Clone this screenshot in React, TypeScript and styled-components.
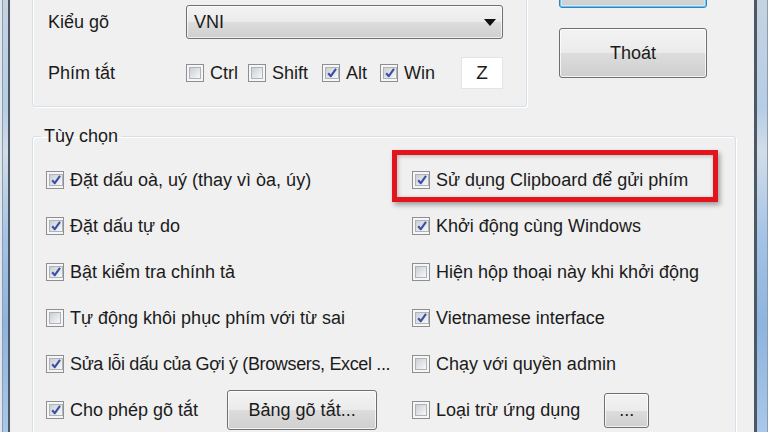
import React from 'react';
import styled, { createGlobalStyle } from 'styled-components';

const GlobalStyle = createGlobalStyle`
  html, body { margin: 0; padding: 0; background: #f0f0f0; }
  body { font-family: "Liberation Sans", Arial, sans-serif; }
  * { box-sizing: border-box; }
`;

const Window = styled.div`
  width: 768px;
  height: 432px;
  overflow: hidden;
  display: flex;
  font-family: "Liberation Sans", Arial, sans-serif;
  font-size: 18px;
  color: #1b1b1b;
`;

const FrameEdge = styled.div<{ $side: 'left' | 'right' }>`
  flex: none;
  width: ${(p) => (p.$side === 'left' ? 11 : 15)}px;
  background: ${(p) =>
      p.$side === 'left'
        ? 'linear-gradient(to right, #dfe5ec 0 2px, #8d9caa 2px 3px, transparent 3px 8px, #4e5862 8px 10px, #e9edf1 10px 11px)'
        : 'linear-gradient(to right, #eef1f4 0 1px, #4e5862 1px 4px, transparent 4px 14px, #8d9caa 14px 15px)'},
    linear-gradient(to bottom, #c6d3e1 0%, #b6cde6 25%, #d3dde8 35%, #a4c3e6 55%, #8eb4df 75%, #a9c8ea 100%);
`;

const Client = styled.div`
  flex: 1;
  background: #f0f0f0;
  padding: 0 17px 0 21px;
  display: flex;
  flex-direction: column;
`;

const TopSection = styled.div`
  display: flex;
  align-items: flex-start;
  margin-top: -42px;
`;

const GroupBox = styled.div`
  width: 495px;
  margin-top: 28px;
  border: 1px solid #d5dfe5;
  border-radius: 3px;
  box-shadow: inset 1px 1px 0 #fff, 1px 1px 0 #fff;
  padding: 18px 23px 17px 15px;
  display: grid;
  grid-template-columns: 138px 1fr;
  grid-template-rows: 34px 32px;
  row-gap: 18px;
  align-items: center;
`;

const FieldLabel = styled.span`
  white-space: nowrap;
`;

const ComboBox = styled.div`
  height: 34px;
  border: 1px solid #707070;
  border-radius: 3px;
  background: linear-gradient(to bottom, #f3f3f3 0%, #ebebeb 50%, #dddddd 50%, #cfcfcf 100%);
  box-shadow: inset 0 0 0 1px rgba(255, 255, 255, 0.7);
  display: flex;
  align-items: center;
  justify-content: space-between;
  padding: 0 6px 0 7px;
`;

const HotkeyRow = styled.div`
  display: flex;
  align-items: center;
  height: 32px;
`;

const CheckItem = styled.label<{ $gapAfter?: number }>`
  display: inline-flex;
  align-items: center;
  gap: 6px;
  margin-right: ${(p) => p.$gapAfter ?? 0}px;
  white-space: nowrap;
`;

const OptionText = styled.span<{ $tight?: boolean }>`
  letter-spacing: ${(p) => (p.$tight ? '-0.35px' : '0')};
`;

const KeyBox = styled.div`
  margin-left: auto;
  width: 42px;
  height: 32px;
  background: #fff;
  border: 1px solid #e3e4e8;
  display: flex;
  align-items: center;
  justify-content: center;
  font-size: 19px;
`;

const ButtonColumn = styled.div`
  margin-left: 32px;
  width: 148px;
  display: flex;
  flex-direction: column;
  gap: 20px;
`;

const PushButton = styled.button<{ $w: number; $h: number; $default?: boolean }>`
  width: ${(p) => p.$w}px;
  height: ${(p) => p.$h}px;
  flex: none;
  font-family: "Liberation Sans", Arial, sans-serif;
  font-size: 18px;
  color: #1b1b1b;
  border: 1px solid ${(p) => (p.$default ? '#3c7fb1' : '#707070')};
  border-radius: 3px;
  background: linear-gradient(to bottom, #f3f3f3 0%, #ebebeb 50%, #dddddd 50%, #cfcfcf 100%);
  box-shadow: ${(p) =>
    p.$default
      ? 'inset 0 0 0 1px #67c8f5, inset 0 0 0 2px #c4e9fb'
      : 'inset 0 0 0 1px rgba(255,255,255,0.75)'};
  padding: 0;
  display: flex;
  align-items: center;
  justify-content: center;
`;

const OptionsGroup = styled.fieldset`
  margin: 19px 0 0 0;
  padding: 11px 0 0 13px;
  border: 1px solid #d5dfe5;
  border-radius: 3px;
  box-shadow: inset 1px 1px 0 #fff, 1px 1px 0 #fff;
  min-width: 0;
  flex: 1;
`;

const Legend = styled.legend`
  padding: 0 3px;
  margin-left: -5px;
  line-height: 20px;
  font-size: 18px;
`;

const OptionsGrid = styled.div`
  display: grid;
  grid-template-columns: 366px 1fr;
  grid-auto-rows: 46px;
`;

const OptionCell = styled.div`
  position: relative;
  display: flex;
  align-items: center;
  white-space: nowrap;
`;

const RedMark = styled.div`
  position: absolute;
  left: -20px;
  top: -7px;
  width: 326px;
  height: 52px;
  border: 5px solid #e3141c;
  box-shadow: 2px 3px 5px rgba(0, 0, 0, 0.35), inset 1px 1px 4px rgba(0, 0, 0, 0.25);
  pointer-events: none;
`;

const Box = styled.span`
  width: 18px;
  height: 18px;
  flex: none;
  border: 1px solid #8e8f8f;
  background: #f6f6f6;
  padding: 2px;
  display: inline-flex;
`;

const BoxInner = styled.span`
  flex: 1;
  border: 1px solid #aeb3b9;
  background: linear-gradient(135deg, #cbcfd5 0%, #e3e5e8 55%, #f8f8f8 100%);
  display: flex;
  align-items: center;
  justify-content: center;
`;

const Check: React.FC<{ checked?: boolean }> = ({ checked }) => (
  <Box>
    <BoxInner>
      {checked && (
        <svg width="12" height="12" viewBox="0 0 12 12">
          <path d="M2.2 6.2 L4.8 9.2 L10 1.8" fill="none" stroke="#3a4fa6" strokeWidth="2.1" strokeLinejoin="round" />
        </svg>
      )}
    </BoxInner>
  </Box>
);

const ComboArrow = () => (
  <svg width="12" height="7" viewBox="0 0 12 7">
    <path d="M0 0 H12 L6 7 Z" fill="#111" />
  </svg>
);

type Opt = {
  label: string;
  checked: boolean;
  tight?: boolean;
  button?: { text: string; w: number; h: number; gap: number };
  mark?: boolean;
};

const options: Opt[] = [
  { label: 'Đặt dấu oà, uý (thay vì òa, úy)', checked: true },
  { label: 'Sử dụng Clipboard để gửi phím', checked: true, mark: true },
  { label: 'Đặt dấu tự do', checked: true },
  { label: 'Khởi động cùng Windows', checked: true },
  { label: 'Bật kiểm tra chính tả', checked: true },
  { label: 'Hiện hộp thoại này khi khởi động', checked: false },
  { label: 'Tự động khôi phục phím với từ sai', checked: false },
  { label: 'Vietnamese interface', checked: true },
  { label: 'Sửa lỗi dấu của Gợi ý (Browsers, Excel ...', checked: true, tight: true },
  { label: 'Chạy với quyền admin', checked: false },
  { label: 'Cho phép gõ tắt', checked: true, button: { text: 'Bảng gõ tắt...', w: 150, h: 40, gap: 29 } },
  { label: 'Loại trừ ứng dụng', checked: false, button: { text: '...', w: 45, h: 35, gap: 24 } },
];

const ButtonGap = styled.span<{ $gap: number }>`
  display: inline-flex;
  margin-left: ${(p) => p.$gap}px;
`;

export default function App() {
  return (
    <>
      <GlobalStyle />
      <Window>
        <FrameEdge $side="left" />
        <Client>
          <TopSection>
            <GroupBox>
              <FieldLabel>Kiểu gõ</FieldLabel>
              <ComboBox>
                <span>VNI</span>
                <ComboArrow />
              </ComboBox>
              <FieldLabel>Phím tắt</FieldLabel>
              <HotkeyRow>
                <CheckItem $gapAfter={10}>
                  <Check />
                  Ctrl
                </CheckItem>
                <CheckItem $gapAfter={14}>
                  <Check />
                  Shift
                </CheckItem>
                <CheckItem $gapAfter={13}>
                  <Check checked />
                  Alt
                </CheckItem>
                <CheckItem>
                  <Check checked />
                  Win
                </CheckItem>
                <KeyBox>Z</KeyBox>
              </HotkeyRow>
            </GroupBox>
            <ButtonColumn>
              <PushButton $w={148} $h={50} $default aria-label="Đóng" />
              <PushButton $w={148} $h={50}>
                Thoát
              </PushButton>
            </ButtonColumn>
          </TopSection>
          <OptionsGroup>
            <Legend>Tùy chọn</Legend>
            <OptionsGrid>
              {options.map((o) => (
                <OptionCell key={o.label}>
                  <CheckItem>
                    <Check checked={o.checked} />
                    <OptionText $tight={o.tight}>{o.label}</OptionText>
                  </CheckItem>
                  {o.button && (
                    <ButtonGap $gap={o.button.gap}>
                      <PushButton $w={o.button.w} $h={o.button.h}>
                        {o.button.text}
                      </PushButton>
                    </ButtonGap>
                  )}
                  {o.mark && <RedMark />}
                </OptionCell>
              ))}
            </OptionsGrid>
          </OptionsGroup>
        </Client>
        <FrameEdge $side="right" />
      </Window>
    </>
  );
}
